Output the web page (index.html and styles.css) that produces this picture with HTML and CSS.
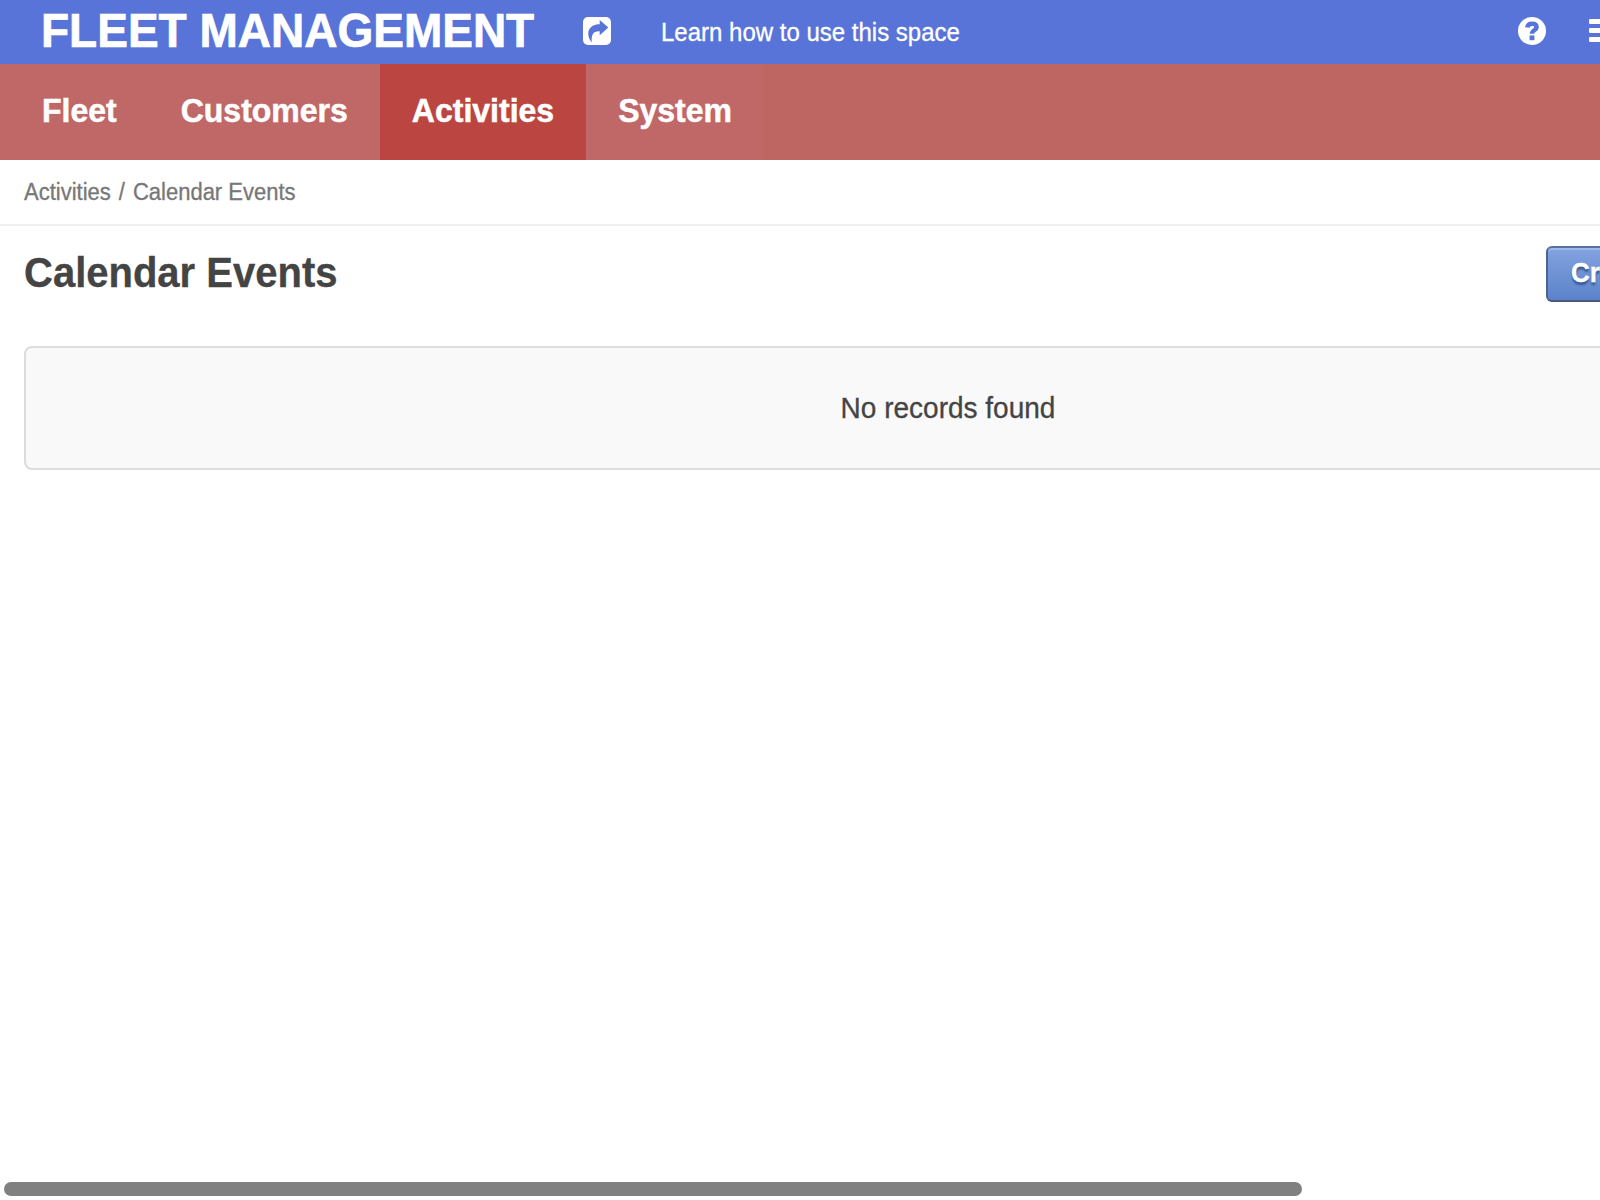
FILE: index.html
```html
<!DOCTYPE html>
<html lang="en">
<head>
<meta charset="utf-8">
<title>Calendar Events</title>
<link rel="stylesheet" href="styles.css">
</head>
<body>
<div class="viewport">
  <div class="page">
    <header class="topbar">
      <div class="brand"><span class="tall">FLEET MANAGEMENT</span></div>
      <svg class="share" viewBox="0 0 28 28" aria-hidden="true">
        <rect width="28" height="28" rx="5" fill="#fff"/>
        <path d="M16.7 3L25.3 10.5L16.7 18.3V14.2C10.5 13.8 8 17.5 8.8 25.5C2.5 17.5 4.5 7.2 16.7 7.2Z" fill="#5874d8"/>
      </svg>
      <a class="learn"><span class="tall">Learn how to use this space</span></a>
      <div class="tools">
        <svg class="help" viewBox="0 0 28 28" aria-hidden="true">
          <circle cx="14" cy="14" r="14" fill="#fff"/>
          <path d="M9.3 10.6C9.6 7.9 11.4 6.8 14.1 6.8C17 6.8 18.6 8.1 18.6 10.3C18.6 13.1 14 13 14 16.8" fill="none" stroke="#5874d8" stroke-width="4.5"/>
          <rect x="11.6" y="18.4" width="4.8" height="4.8" fill="#5874d8"/>
        </svg>
        <svg class="menu" viewBox="0 0 28 23" aria-hidden="true">
          <rect width="28" height="5" rx="1.2" fill="#fff"/>
          <rect y="9" width="28" height="5" rx="1.2" fill="#fff"/>
          <rect y="18" width="28" height="5" rx="1.2" fill="#fff"/>
        </svg>
      </div>
    </header>
    <nav class="nav">
      <div class="tabs">
        <a class="tab"><span class="tall">Fleet</span></a>
        <a class="tab"><span class="tall">Customers</span></a>
        <a class="tab active"><span class="tall">Activities</span></a>
        <a class="tab"><span class="tall">System</span></a>
      </div>
    </nav>
    <div class="crumbs"><span class="tall">Activities</span><span class="tall">/</span><span class="tall">Calendar Events</span></div>
    <main class="content">
      <div class="heading">
        <h1 class="title"><span class="tall">Calendar Events</span></h1>
        <button class="create"><span class="tall">Create</span></button>
      </div>
      <div class="empty"><span class="tall">No records found</span></div>
    </main>
  </div>
  <div class="scrollbar"></div>
</div>
</body>
</html>
```
FILE: styles.css
```css
* { box-sizing: border-box; }
body {
  margin: 0;
  background: #fff;
  color: #444;
  font-family: "Liberation Sans", Arial, sans-serif;
}
.viewport {
  position: relative;
  height: 1200px;
  overflow: hidden;
}
.page { width: 1896px; }
/* Slightly taller, firmer letterforms */
.tall {
  display: inline-block;
  transform: scaleY(1.05);
  -webkit-text-stroke: 0.3px currentColor;
}
.topbar {
  display: flex;
  align-items: center;
  height: 64px;
  padding-left: 41px;
  background: #5874d8;
  color: #fff;
}
.brand {
  width: 542px;
  height: 64px;
  font-size: 46px;
  font-weight: bold;
  line-height: 61px;
  white-space: nowrap;
}
.brand .tall { -webkit-text-stroke-width: 0.7px; }
.share { flex: none; width: 28px; height: 28px; margin-top: -2px; }
.learn { width: 299px; margin-left: 50px; font-size: 24px; line-height: 65px; white-space: nowrap; }
.tools {
  display: flex;
  align-items: center;
  gap: 43px;
  margin-left: 558px;
}
.help { width: 28px; height: 28px; margin-top: -2px; }
.menu { width: 28px; height: 23px; margin-top: -3px; }
.nav { display: flex; height: 96px; background: #be6661; }
.tabs { display: flex; padding-left: 10px; background: #bf6867; }
.tab {
  padding: 0 32px;
  color: #fff;
  font-size: 32px;
  font-weight: bold;
  line-height: 92px;
}
.tab .tall { -webkit-text-stroke-width: 0.5px; }
.active { background: #bb4641; }
.crumbs {
  display: flex;
  gap: 8px;
  height: 66px;
  padding-left: 24px;
  border-bottom: 2px solid #f0f0f0;
  color: #777;
  font-size: 22px;
  line-height: 66px;
}
.content { padding: 20px 24px; }
.heading { display: flex; height: 100px; }
.title {
  flex: none;
  width: 1522px;
  margin: 0;
  font-size: 40px;
  line-height: 52px;
}
.create {
  flex: none;
  height: 56px;
  padding: 0 23px 2px;
  border: 2px solid;
  border-color: #56739f #4d648e #49597a #4e638c;
  border-radius: 6px;
  background: linear-gradient(#84a3e0, #5b82c9);
  box-shadow: inset 0 2px #a0baed;
  color: #fff;
  font: bold 26px "Liberation Sans", Arial, sans-serif;
  text-shadow: 0 2px 2px #385b91;
  white-space: nowrap;
}
.empty {
  height: 124px;
  border: 2px solid #dcdcdc;
  border-radius: 8px;
  background: #f9f9f9;
  font-size: 28px;
  line-height: 122px;
  text-align: center;
}
.scrollbar {
  position: absolute;
  left: 4px;
  bottom: 4px;
  width: 1298px;
  height: 14px;
  border-radius: 7px;
  background: #808080;
}
```
